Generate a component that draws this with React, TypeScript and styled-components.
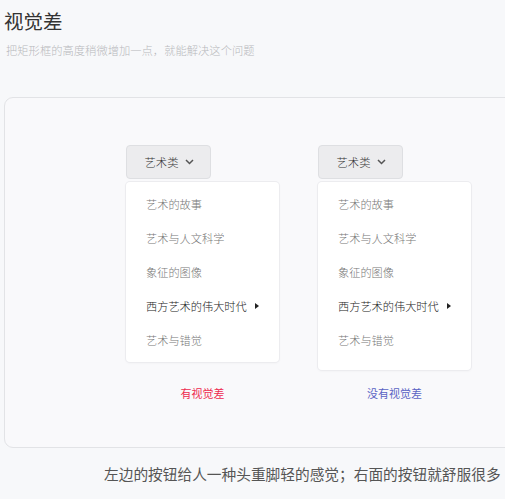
import React from 'react'
import styled, { createGlobalStyle } from 'styled-components'

const GlobalStyle = createGlobalStyle`
  html, body {
    margin: 0;
    padding: 0;
    background: #f7f8fa;
    font-family: "Noto Sans CJK SC", "Noto Sans", sans-serif;
    font-weight: 300;
    overflow: hidden;
  }
`

const Page = styled.div`
  width: 505px;
  height: 499px;
  overflow: hidden;
  padding-left: 4px;
  box-sizing: border-box;
`

const Title = styled.h1`
  margin: 7px 0 0;
  font-size: 19.5px;
  line-height: 28px;
  font-weight: 400;
  color: #333;
`

const Subtitle = styled.p`
  margin: 7px 0 0 2px;
  font-size: 11.3px;
  line-height: 16px;
  color: #b8b8bc;
`

const Card = styled.div`
  margin-top: 39px;
  width: 560px;
  height: 351px;
  box-sizing: border-box;
  border: 1px solid #e2e3e6;
  border-radius: 9px;
  background: #f9f9fb;
  padding: 47px 0 0 121px;
`

const Columns = styled.div`
  display: grid;
  grid-template-columns: 153px 153px;
  column-gap: 39px;
  grid-template-rows: auto 188px auto;
`

const Button = styled.div`
  grid-row: 1;
  width: 85px;
  height: 34px;
  box-sizing: border-box;
  border: 1px solid #dedfe2;
  border-radius: 4px;
  background: #ececee;
  display: flex;
  align-items: center;
  justify-content: center;
  gap: 7px;
  font-size: 11.3px;
  color: #333;
  padding-left: 2px;
`

const Menu = styled.div<{ $bottom: number }>`
  grid-row: 2;
  align-self: start;
  margin-top: 3px;
  background: #fff;
  border-radius: 4px;
  box-shadow: 0 0 0 1px #ececef, 0 1px 3px rgba(0, 0, 0, 0.05);
  padding: 5px 0 ${(p) => p.$bottom}px;
`

const Item = styled.div<{ $active?: boolean }>`
  height: 34px;
  display: flex;
  align-items: center;
  padding-left: 20px;
  font-size: 11.2px;
  color: ${(p) => (p.$active ? '#222' : '#777')};
`

const Caret = styled.span`
  margin-left: 8px;
  width: 0;
  height: 0;
  border-top: 3.5px solid transparent;
  border-bottom: 3.5px solid transparent;
  border-left: 4px solid #222;
`

const Label = styled.div<{ $color: string }>`
  grid-row: 3;
  text-align: center;
  margin-top: 18px;
  font-size: 11px;
  line-height: 16px;
  font-weight: 400;
  color: ${(p) => p.$color};
`

const Note = styled.p`
  margin: 15px 0 0 100px;
  white-space: nowrap;
  font-size: 14.7px;
  line-height: 22px;
  font-weight: 400;
  color: #555;
`

const items = ['艺术的故事', '艺术与人文科学', '象征的图像', '西方艺术的伟大时代', '艺术与错觉']

const Chevron = () => (
  <svg width="9" height="6" viewBox="0 0 9 6">
    <path d="M1 1l3.5 3.5L8 1" fill="none" stroke="#555" strokeWidth="1.5" />
  </svg>
)

const Dropdown = ({ bottom }: { bottom: number }) => (
  <Menu $bottom={bottom}>
    {items.map((t, i) => (
      <Item key={t} $active={i === 3}>
        {t}
        {i === 3 && <Caret />}
      </Item>
    ))}
  </Menu>
)

export default function App() {
  return (
    <Page>
      <GlobalStyle />
      <Title>视觉差</Title>
      <Subtitle>把矩形框的高度稍微增加一点，就能解决这个问题</Subtitle>
      <Card>
        <Columns>
          <Button>艺术类 <Chevron /></Button>
          <Button>艺术类 <Chevron /></Button>
          <Dropdown bottom={5} />
          <Dropdown bottom={13} />
          <Label $color="#ee2a4f">有视觉差</Label>
          <Label $color="#5a63c4">没有视觉差</Label>
        </Columns>
      </Card>
      <Note>左边的按钮给人一种头重脚轻的感觉；右面的按钮就舒服很多</Note>
    </Page>
  )
}
